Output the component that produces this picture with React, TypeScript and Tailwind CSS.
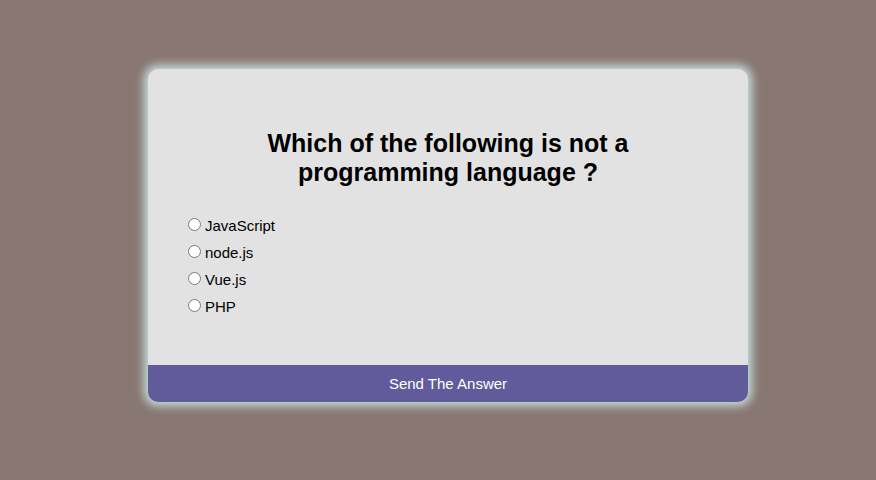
const options = ["JavaScript", "node.js", "Vue.js", "PHP"];

export default function App() {
  return (
    <main className="flex min-h-screen items-center justify-center bg-[#887672] pl-5 pb-[9px] font-['Liberation_Sans',Arial,sans-serif] text-black">
      <form
        className="w-full max-w-[600px] overflow-hidden rounded-[10px] bg-[#e2e2e2] shadow-[0_0_10px_4px_#c5dedb]"
        onSubmit={(event) => event.preventDefault()}
      >
        <fieldset className="px-10 pt-15 pb-[46px]">
          <h2 className="mx-auto max-w-[400px] text-center text-[25px] leading-[29px] font-bold">
            Which of the following is not a programming language ?
          </h2>
          <div className="mt-6 flex flex-col">
            {options.map((option) => (
              <label key={option} className="flex h-[27px] items-center gap-1 text-[15px] leading-[17px]">
                <input type="radio" name="answer" value={option} className="size-[13px]" />
                <span className="pt-0.5">{option}</span>
              </label>
            ))}
          </div>
        </fieldset>
        <button type="submit" className="block w-full bg-[#625b9b] py-2.5 text-[15px] leading-[17px] text-white">
          Send The Answer
        </button>
      </form>
    </main>
  );
}
